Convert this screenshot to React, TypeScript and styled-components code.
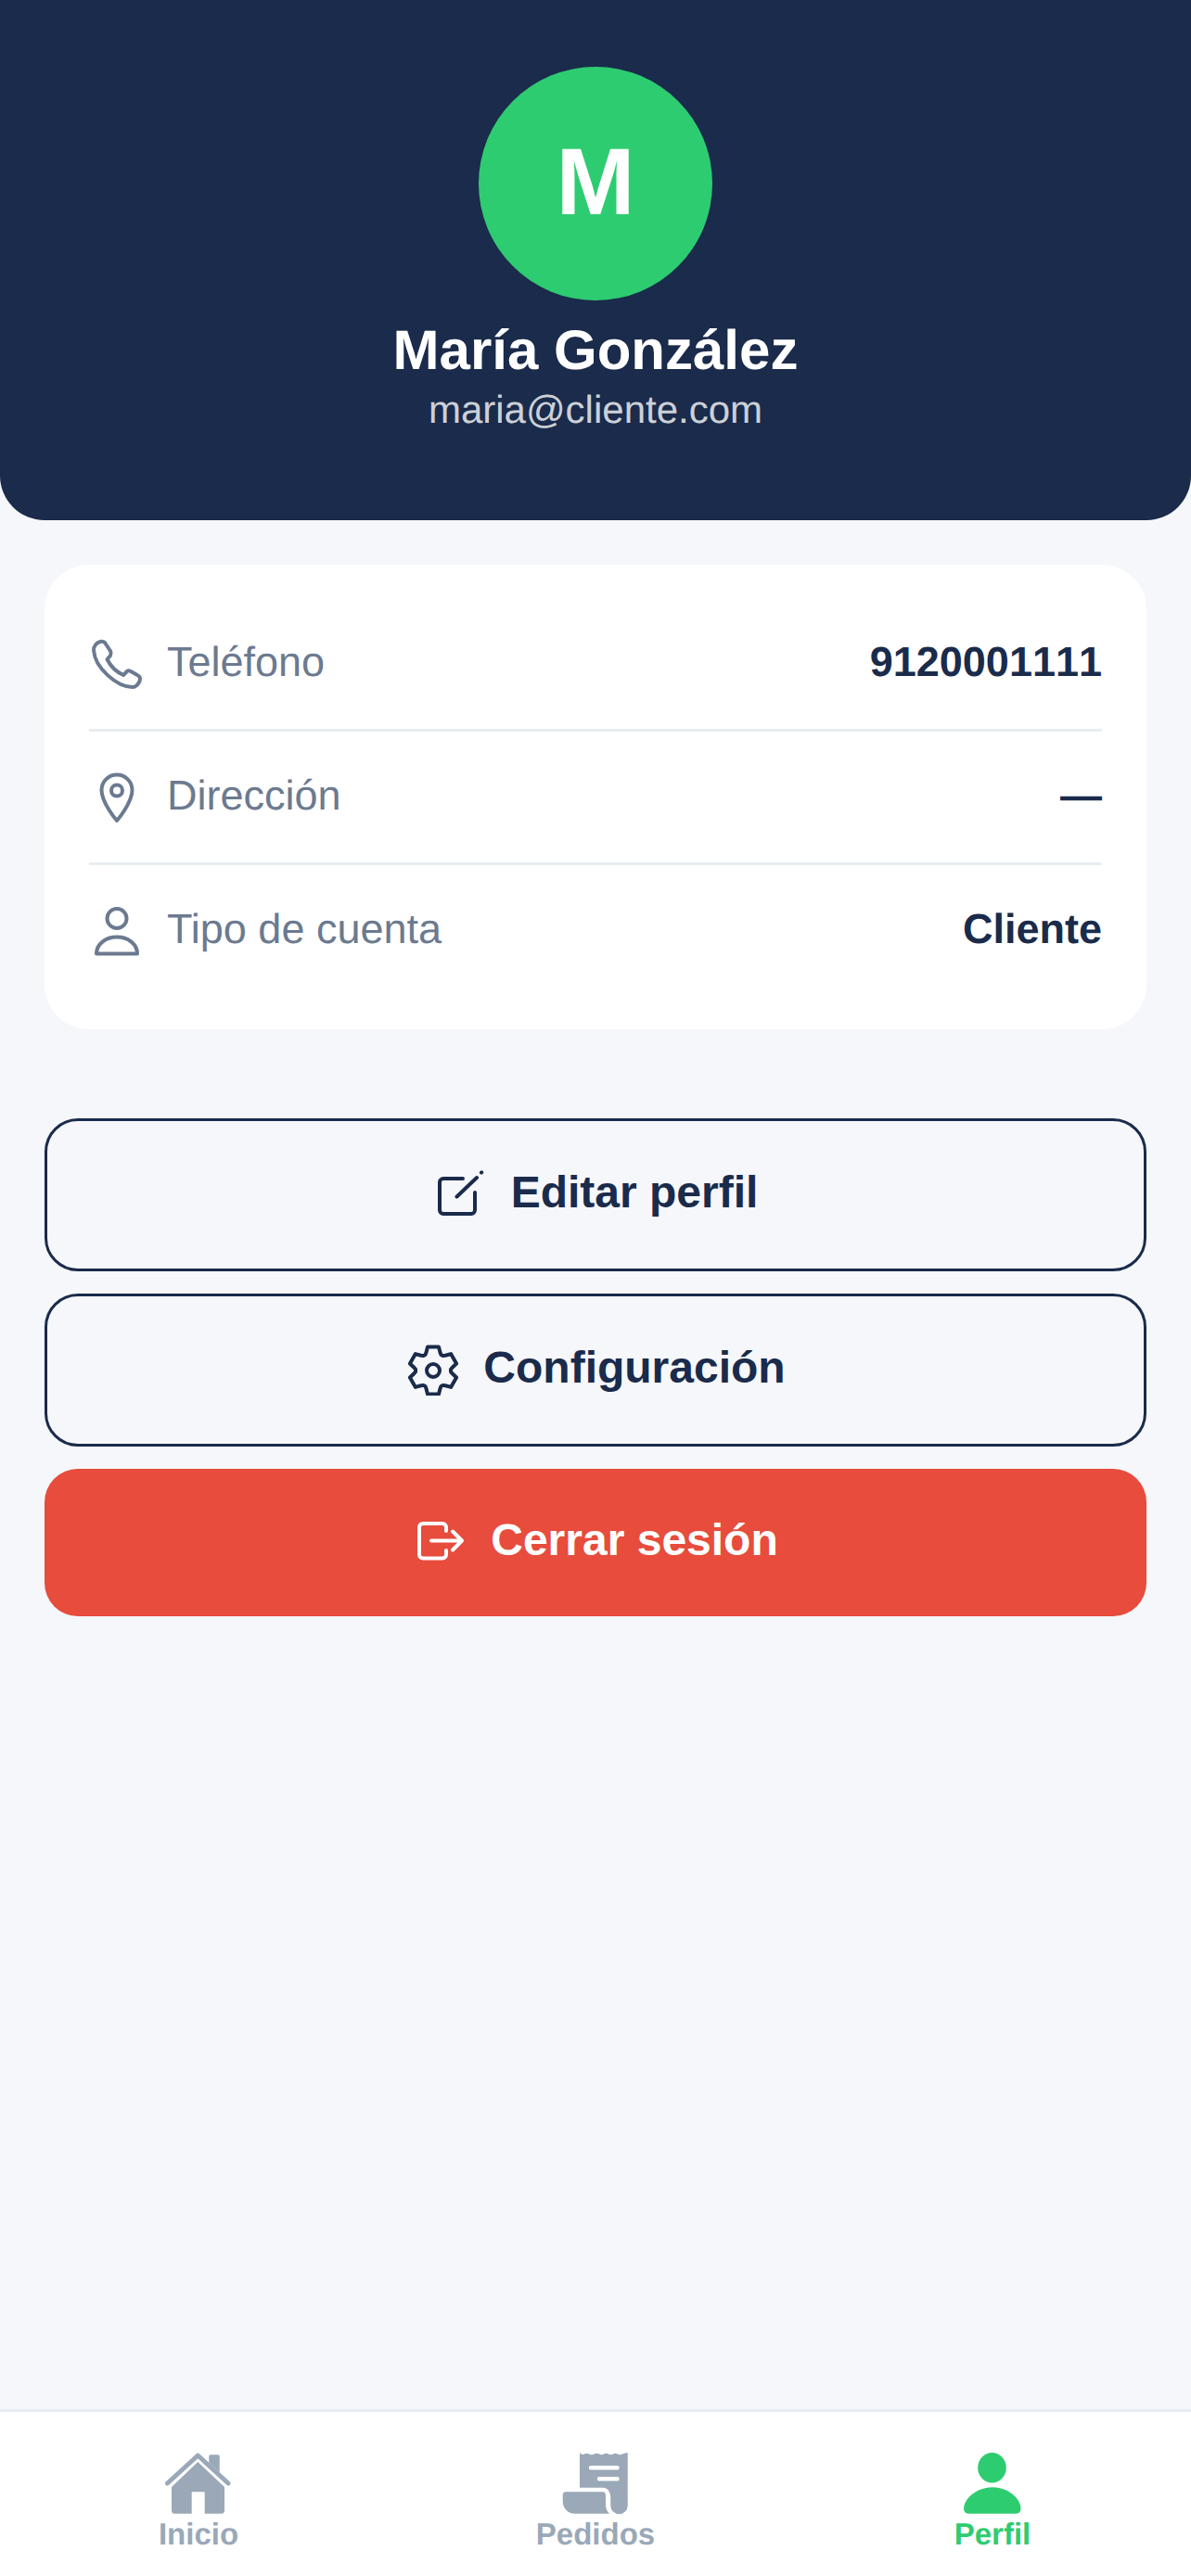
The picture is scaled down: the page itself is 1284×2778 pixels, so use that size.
import React from 'react';
import styled, { createGlobalStyle } from 'styled-components';

const GlobalStyle = createGlobalStyle`
    * { box-sizing: border-box; }
    html, body { margin: 0; padding: 0; }
    body {
        background: #f5f7fb;
        font-family: "Liberation Sans", Arial, sans-serif;
        text-rendering: geometricPrecision;
    }
`;

const Page = styled.div`
    min-height: 2778px;
    display: flex;
    flex-direction: column;
    background: #f5f7fb;
`;

const Header = styled.header`
    height: 561px;
    padding-top: 72px;
    display: flex;
    flex-direction: column;
    align-items: center;
    background: #1a2b4b;
    border-radius: 0 0 48px 48px;
`;

const Avatar = styled.div`
    width: 252px;
    height: 252px;
    padding-bottom: 4px;
    border-radius: 50%;
    display: flex;
    align-items: center;
    justify-content: center;
    background: #2ecc71;
    color: #fff;
    font-size: 102px;
    font-weight: 700;
`;

const Name = styled.h1`
    margin: 18px 0 0;
    color: #fff;
    font-size: 60px;
    line-height: 72px;
    font-weight: 700;
`;

const Email = styled.div`
    margin-top: 2px;
    color: rgba(255, 255, 255, 0.8);
    font-size: 42px;
    line-height: 52px;
`;

const Card = styled.section`
    margin: 48px 48px 0;
    padding: 36px 48px;
    background: #fff;
    border-radius: 48px;
`;

const Row = styled.div`
    height: 144px;
    display: flex;
    align-items: center;
    gap: 24px;
    border-bottom: 3px solid #e8edf2;
    &:last-child {
        height: 141px;
        border-bottom: 0;
    }
`;

const Label = styled.span`
    flex: 1;
    margin-bottom: 4px;
    color: #6b7a90;
    font-size: 45px;
`;

const Value = styled.span`
    margin-bottom: 4px;
    color: #1a2b4b;
    font-size: 45px;
    font-weight: 700;
    font-kerning: none;
`;

const Actions = styled.div`
    margin: 96px 48px 0;
    display: flex;
    flex-direction: column;
    gap: 24px;
`;

const Button = styled.button<{ $danger?: boolean }>`
    width: 100%;
    height: ${(p) => (p.$danger ? '159px' : '165px')};
    display: flex;
    align-items: center;
    justify-content: center;
    gap: 24px;
    padding: 0 0 6px;
    border: ${(p) => (p.$danger ? '0' : '3px solid #1a2b4b')};
    border-radius: 36px;
    background: ${(p) => (p.$danger ? '#e74c3c' : 'transparent')};
    color: ${(p) => (p.$danger ? '#fff' : '#1a2b4b')};
    font-family: inherit;
    font-size: 48px;
    font-weight: 700;
`;

const Nav = styled.nav`
    margin-top: auto;
    height: 180px;
    padding-top: 41px;
    display: flex;
    background: #fff;
    border-top: 3px solid #e8ecf3;
`;

const NavItem = styled.div<{ $active?: boolean }>`
    flex: 1;
    display: flex;
    flex-direction: column;
    align-items: center;
    color: ${(p) => (p.$active ? '#2ecc71' : '#9aa8b8')};
    font-size: 33px;
    font-weight: 700;
`;

const Icon = styled.svg`
    flex: none;
    width: 60px;
    height: 60px;
    fill: none;
    stroke: currentColor;
    stroke-width: 4;
    stroke-linecap: round;
    stroke-linejoin: round;
`;

const RowIcon = styled(Icon)`
    color: #6b7a90;
`;

const NavIcon = styled.svg`
    width: 72px;
    height: 72px;
    fill: currentColor;
`;

// six flat teeth, one pointing straight up
const gearPath = () => {
    const cx = 30;
    const cy = 33;
    const pts: string[] = [];
    for (let k = 0; k < 6; k++) {
        const a = ((-90 + 60 * k) * Math.PI) / 180;
        const at = (radial: number, side: number) => {
            const x = cx + radial * Math.cos(a) - side * Math.sin(a);
            const y = cy + radial * Math.sin(a) + side * Math.cos(a);
            return `${x.toFixed(2)} ${y.toFixed(2)}`;
        };
        pts.push(at(17, -8.5), at(19.5, -7.5), at(25.5, -6), at(25.5, 6), at(19.5, 7.5), at(17, 8.5));
    }
    return `M${pts.join('L')}Z`;
};

const PhoneIcon = () => (
    <RowIcon viewBox="0 0 60 60">
        <path d="M12 6C8 7 5 11 5 15C6 34 30 55 47 55C51 55 55 50 55 46C55 44 54 43 52 42L45 38C43 37 41 37 40 39L37 42C28 38 23 32 19.5 25L23 21C24 19 24 18 23 16L17 7C16 6 14 5.500 12 6Z" />
    </RowIcon>
);

const PinIcon = () => (
    <RowIcon viewBox="0 0 60 60">
        <path d="M30 55C30 55 13.500 36 13.500 22A16.500 16.500 0 0 1 46.500 22C46.500 36 30 55 30 55Z" />
        <circle cx="30" cy="22.500" r="6" />
    </RowIcon>
);

const UserIcon = () => (
    <RowIcon viewBox="0 0 60 60">
        <circle cx="30" cy="16.500" r="10.500" />
        <path d="M8 54.500C8 44 18 36.500 30 36.500C42 36.500 52 44 52 54.500Z" />
    </RowIcon>
);

const EditIcon = () => (
    <Icon viewBox="0 0 60 60">
        <path d="M32 15H11A4 4 0 0 0 7 19V49A4 4 0 0 0 11 53H41A4 4 0 0 0 45 49V30" />
        <path d="M25.500 34.500L47 14M52 8.500L52.200 8.300" />
    </Icon>
);

const GearIcon = () => (
    <Icon viewBox="0 0 60 60">
        <path d={gearPath()} />
        <circle cx="30" cy="33" r="7" />
    </Icon>
);

const LogoutIcon = () => (
    <Icon viewBox="0 0 60 60">
        <path d="M36 20V16A4 4 0 0 0 32 12H11A4 4 0 0 0 7 16V45.500A4 4 0 0 0 11 49.500H32A4 4 0 0 0 36 45.500V41" />
        <path d="M20 30.500H53M43 20.500L53 30.500L43 40.500" />
    </Icon>
);

const HomeIcon = () => (
    <NavIcon viewBox="0 0 72 72">
        <path d="M47.300 7A1.700 1.700 0 0 1 49 5.300H57A1.700 1.700 0 0 1 58.700 7V24L47.300 14Z" />
        <path d="M2.500 36L35.300 6L68 36" fill="none" stroke="currentColor" strokeWidth="5" strokeLinecap="round" strokeLinejoin="round" />
        <path d="M35.300 13L64 40V65.200A3.500 3.500 0 0 1 60.500 68.700H42.700V45.300H28.700V68.700H10.500A3.500 3.500 0 0 1 7 65.200V40Z" />
    </NavIcon>
);

const ReceiptIcon = () => (
    <NavIcon viewBox="0 0 72 72">
        <path d="M19 3Q21.500 6 24 4.500T29 4.500T34.500 4.500T40 4.500T45 4.500T50 4.500T55 4.500T60 4.500T65 4.500T70.700 3V60A9.200 9.200 0 0 1 52.300 60V52C52.300 45 49 40.700 44 40.700H19Z" />
        <path d="M4 45.300H44C46 45.300 47 47 47 50V58C47 63 48 66 51 68.700H14C6 68.700 0.700 63 0.700 55V48.500A3.300 3.300 0 0 1 4 45.300Z" />
        <path d="M31 19.300H59.500M40 31.300H59.500" fill="none" stroke="#fff" strokeWidth="4.500" strokeLinecap="round" />
    </NavIcon>
);

const PersonIcon = () => (
    <NavIcon viewBox="0 0 72 72">
        <ellipse cx="35.500" cy="19.300" rx="15.300" ry="16.300" />
        <path d="M36 40.300C52 40.300 66.500 52 66.500 63.700A5 5 0 0 1 61.500 68.700H10A5 5 0 0 1 5 63.700C5 52 20 40.300 36 40.300Z" />
    </NavIcon>
);

export default function App() {
    return (
        <Page>
            <GlobalStyle />
            <Header>
                <Avatar>M</Avatar>
                <Name>María González</Name>
                <Email>maria@cliente.com</Email>
            </Header>
            <Card>
                <Row>
                    <PhoneIcon />
                    <Label>Teléfono</Label>
                    <Value>9120001111</Value>
                </Row>
                <Row>
                    <PinIcon />
                    <Label>Dirección</Label>
                    <Value>—</Value>
                </Row>
                <Row>
                    <UserIcon />
                    <Label>Tipo de cuenta</Label>
                    <Value>Cliente</Value>
                </Row>
            </Card>
            <Actions>
                <Button>
                    <EditIcon />
                    Editar perfil
                </Button>
                <Button>
                    <GearIcon />
                    Configuración
                </Button>
                <Button $danger>
                    <LogoutIcon />
                    Cerrar sesión
                </Button>
            </Actions>
            <Nav>
                <NavItem>
                    <HomeIcon />
                    Inicio
                </NavItem>
                <NavItem>
                    <ReceiptIcon />
                    Pedidos
                </NavItem>
                <NavItem $active>
                    <PersonIcon />
                    Perfil
                </NavItem>
            </Nav>
        </Page>
    );
}
